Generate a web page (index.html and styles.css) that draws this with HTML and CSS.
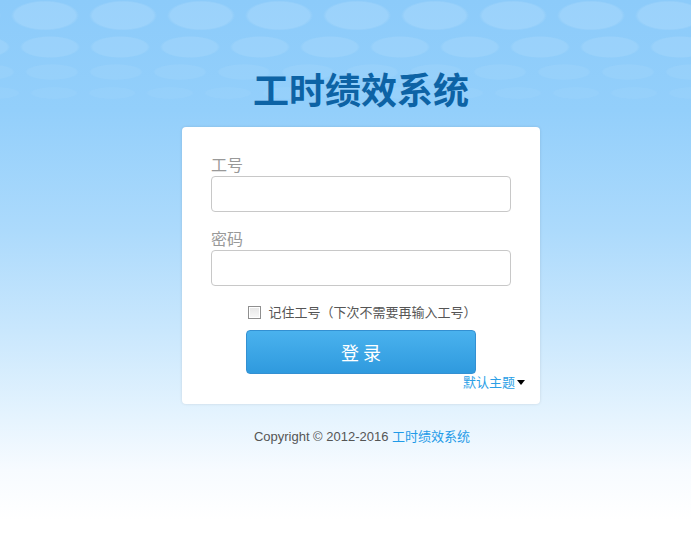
FILE: index.html
```html
<!DOCTYPE html>
<html lang="zh-CN">
<head>
<meta charset="utf-8">
<title>工时绩效系统</title>
<link rel="stylesheet" href="styles.css">
</head>
<body>
<div class="page">
  <h1 class="title">工时绩效系统</h1>
  <form class="card">
    <label class="label" for="uid">工号</label>
    <input class="input" id="uid" type="text">
    <label class="label label-2" for="pwd">密码</label>
    <input class="input" id="pwd" type="password">
    <div class="remember">
      <span class="check"></span>
      <span class="remember-text">记住工号（下次不需要再输入工号）</span>
    </div>
    <button class="btn" type="button">登 录</button>
    <div class="theme-row">
      <a class="theme" href="#">默认主题</a><span class="caret"></span>
    </div>
  </form>
  <div class="footer">Copyright © 2012-2016 <a class="footer-link" href="#">工时绩效系统</a></div>
</div>
</body>
</html>
```
FILE: styles.css
```css
html, body {
  margin: 0;
  padding: 0;
}
body {
  font-family: "Liberation Sans", "Noto Sans CJK SC", sans-serif;
}
.page {
  min-height: 535px;
  box-sizing: border-box;
  padding-top: 66px;
  padding-left: 31px;
  background:
    radial-gradient(ellipse 34px 15px at 50% 50%, rgba(255,255,255,0.13) 90%, rgba(255,255,255,0) 100%) 6px 0 / 78px 31px repeat-x,
    radial-gradient(ellipse 30px 11px at 50% 50%, rgba(255,255,255,0.10) 90%, rgba(255,255,255,0) 100%) 15px 35px / 70px 24px repeat-x,
    radial-gradient(ellipse 27px 8px at 50% 50%, rgba(255,255,255,0.06) 90%, rgba(255,255,255,0) 100%) 20px 63px / 64px 18px repeat-x,
    radial-gradient(ellipse 24px 6px at 50% 50%, rgba(255,255,255,0.04) 90%, rgba(255,255,255,0) 100%) 25px 86px / 58px 14px repeat-x,
    linear-gradient(#8ccbfa 0, #93cffb 110px, #acdafc 230px, #c9e7fd 330px, #e6f4fe 420px, #f7fbff 470px, #ffffff 520px);
}
.title {
  margin: 0;
  text-align: center;
  font-size: 36px;
  line-height: 44px;
  font-weight: bold;
  color: #0d63a5;
  font-family: "Noto Sans CJK SC", sans-serif;
}
.card {
  width: 358px;
  box-sizing: border-box;
  margin: 17px auto 0;
  padding: 27px 29px 0;
  height: 277px;
  background: #fff;
  border-radius: 4px;
  box-shadow: 0 0 3px rgba(0, 0, 0, 0.12);
  display: flex;
  flex-direction: column;
}
.label {
  font-size: 16px;
  line-height: 20px;
  color: #999;
  font-family: "Noto Sans CJK SC", sans-serif;
}
.label-2 {
  margin-top: 16px;
}
.input {
  margin: 2px 0 0;
  width: 300px;
  height: 36px;
  box-sizing: border-box;
  border: 1px solid #c8c8c8;
  border-radius: 4px;
  padding: 0 8px;
  font-size: 14px;
  outline: none;
}
.remember {
  display: flex;
  align-items: center;
  justify-content: center;
  gap: 7px;
  margin-top: 17px;
  height: 18px;
  padding-left: 3px;
}
.check {
  width: 11px;
  height: 11px;
  border: 1px solid #8f8f8f;
  background: linear-gradient(#e6e6e6, #f8f8f8);
  box-shadow: inset 0 0 0 1px #fff;
}
.remember-text {
  font-size: 13px;
  color: #555;
  font-family: "Noto Sans CJK SC", sans-serif;
  line-height: 18px;
}
.btn {
  align-self: center;
  margin: 9px 0 0;
  width: 230px;
  height: 44px;
  border: 1px solid #3390d2;
  border-radius: 4px;
  background: linear-gradient(#4ab2ee, #2f9ade);
  color: #fff;
  font-size: 18px;
  padding: 0;
  font-family: "Noto Sans CJK SC", sans-serif;
  cursor: pointer;
}
.theme-row {
  display: flex;
  justify-content: flex-end;
  align-items: center;
  margin-right: -14px;
  height: 16px;
  margin-top: 0;
}
.theme {
  font-size: 13px;
  line-height: 16px;
  color: #2b9fe6;
  text-decoration: none;
  font-family: "Noto Sans CJK SC", sans-serif;
}
.caret {
  width: 0;
  height: 0;
  margin-left: 2px;
  border-left: 4px solid transparent;
  border-right: 4px solid transparent;
  border-top: 5px solid #000;
}
.footer {
  margin-top: 23px;
  text-align: center;
  font-size: 13px;
  line-height: 18px;
  color: #555;
  padding-left: 2px;
}
.footer-link {
  color: #1f9be8;
  text-decoration: none;
  font-family: "Noto Sans CJK SC", sans-serif;
}
```
